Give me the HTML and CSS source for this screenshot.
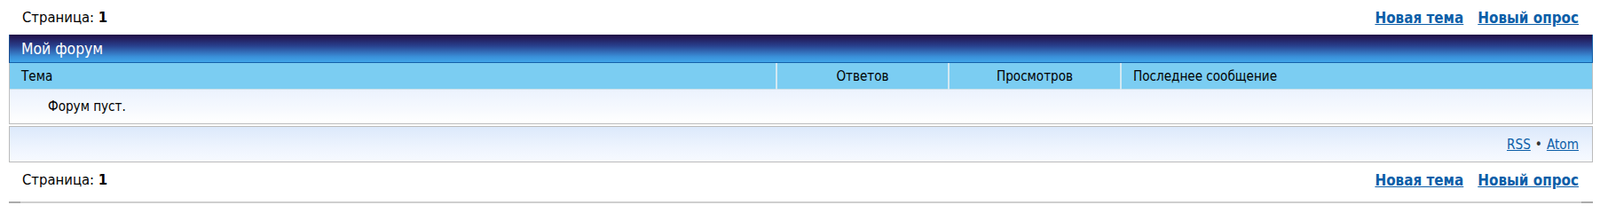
FILE: index.html
```html
<!DOCTYPE html>
<html lang="ru">
<head>
<meta charset="utf-8">
<title>Мой форум</title>
<link rel="stylesheet" href="styles.css">
</head>
<body>
<div class="page">
  <div class="actionbar">
    <span class="pagination">Страница: <b>1</b></span>
    <div class="actions">
      <a href="#">Новая тема</a>
      <a href="#">Новый опрос</a>
    </div>
  </div>

  <div class="forum">
    <div class="forum-title">Мой форум</div>
    <table class="topics">
      <thead>
        <tr>
          <th class="col-topic">Тема</th>
          <th class="col-num">Ответов</th>
          <th class="col-num">Просмотров</th>
          <th class="col-last">Последнее сообщение</th>
        </tr>
      </thead>
      <tbody>
        <tr>
          <td class="empty" colspan="4">Форум пуст.</td>
        </tr>
      </tbody>
    </table>
  </div>

  <div class="feeds">
    <a href="#">RSS</a> <span class="dot">•</span> <a href="#">Atom</a>
  </div>

  <div class="actionbar">
    <span class="pagination">Страница: <b>1</b></span>
    <div class="actions">
      <a href="#">Новая тема</a>
      <a href="#">Новый опрос</a>
    </div>
  </div>

  <div class="bottom-line"></div>
</div>
</body>
</html>
```

FILE: styles.css
```css
html, body {
  margin: 0;
  padding: 0;
  background: #ffffff;
}

body {
  font-family: "DejaVu Sans Condensed", "DejaVu Sans", Verdana, sans-serif;
  font-size: 15.1px;
  color: #000;
}

.page {
  padding: 0 8px 0 10px;
}

.actionbar {
  display: flex;
  justify-content: space-between;
  align-items: center;
  height: 39px;
  padding: 0 16px 0 15px;
  box-sizing: border-box;
  font-size: 16.5px;
}

.actionbar + .bottom-line {
  margin-top: 5px;
}

.pagination b {
  font-weight: bold;
}

.actions {
  display: flex;
  gap: 16px;
}

.actions a {
  color: #0c5ea8;
  font-weight: bold;
  font-size: 16.9px;
  text-decoration: underline;
}

.forum {
  border-left: 1px solid #c0c0c0;
  border-right: 1px solid #c0c0c0;
  border-bottom: 1px solid #bdbdbd;
}

.forum-title {
  height: 31px;
  line-height: 31px;
  padding: 1px 13px 0;
  box-sizing: border-box;
  height: 32px;
  font-size: 17.4px;
  color: #ffffff;
  background: linear-gradient(to bottom, #210c44 0%, #283f8c 40%, #3a8fd8 80%, #40a6ea 100%);
  border-bottom: 1px solid #1460a8;
  margin: 0 -1px;
  border-left: 1px solid #1b4d8f;
  border-right: 1px solid #1460a8;
}

.topics {
  width: 100%;
  border-collapse: collapse;
  table-layout: fixed;
}

.topics th {
  height: 29px;
  padding: 2px 13px 0;
  font-weight: normal;
  background: #7bcdf2;
  border-bottom: 1px solid #c8dfe9;
  box-sizing: border-box;
}

.topics th + th {
  border-left: 2px solid #d2e8f2;
}

.col-topic {
  text-align: left;
  width: 864px;
}

.col-num {
  text-align: center;
  width: 194px;
}

.col-last {
  text-align: left;
}

.topics td.empty {
  height: 39px;
  padding: 1px 0 0 43px;
  box-sizing: border-box;
  background: linear-gradient(to bottom, #ebf2fd 0%, #f6f9fe 60%, #ffffff 100%);
}

.feeds {
  margin-top: 2px;
  height: 39px;
  display: flex;
  justify-content: flex-end;
  align-items: center;
  gap: 5px;
  padding: 0 15px;
  font-size: 15.2px;
  border: 1px solid #bbbbbb;
  background: linear-gradient(to bottom, #dce9fb 0%, #eef4fe 60%, #f7faff 100%);
}

.feeds a {
  color: #0c5ea8;
  text-decoration: underline;
}

.feeds .dot {
  color: #333;
}

.bottom-line {
  height: 2px;
  background: #cfcfcf;
  display: flex;
  justify-content: space-between;
}

.bottom-line::before,
.bottom-line::after {
  content: "";
  width: 13px;
  background: #ababab;
}
```
